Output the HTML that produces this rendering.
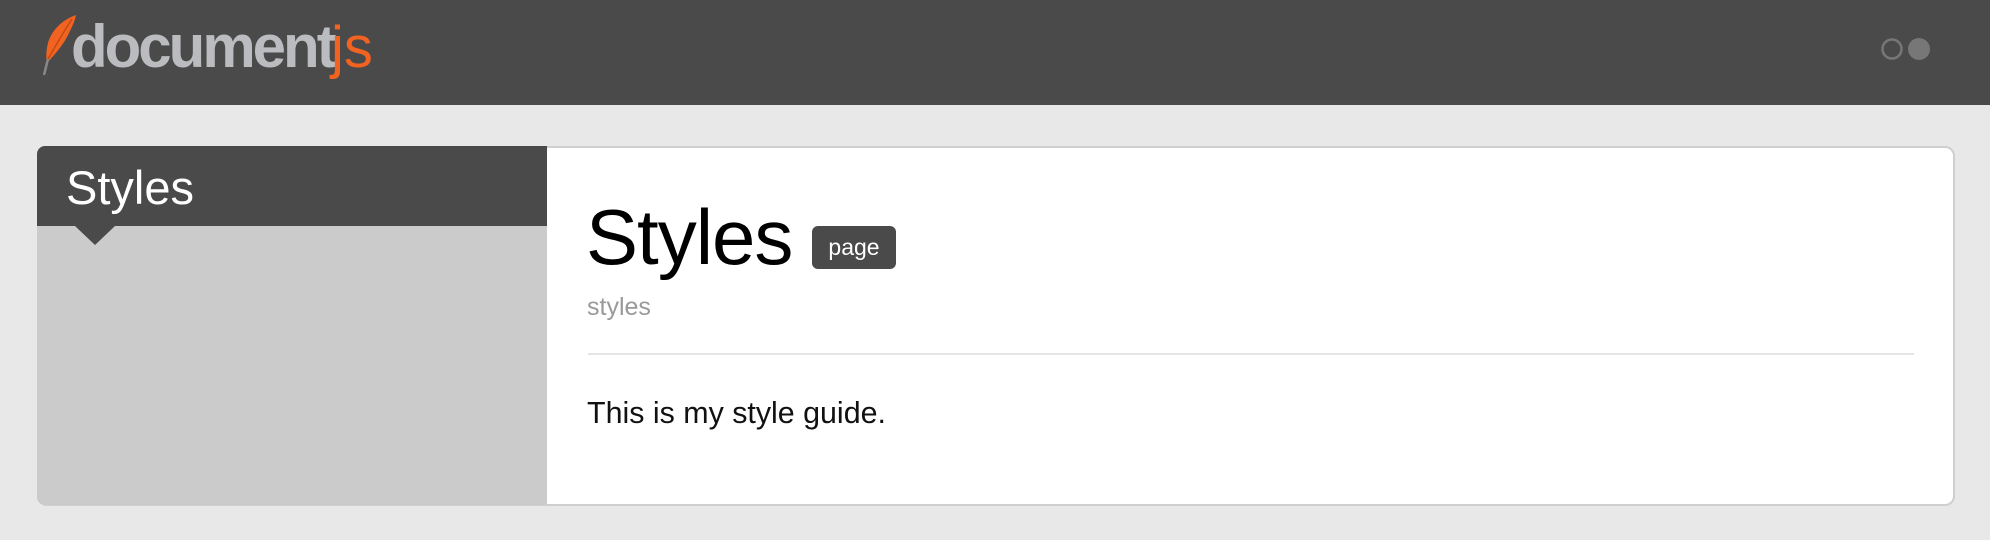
<!DOCTYPE html>
<html><head><meta charset="utf-8"><style>
body{margin:0;width:1990px;height:540px;background:#e8e8e8;font-family:"Liberation Sans",sans-serif;overflow:hidden;position:relative}
.hdr{position:absolute;left:0;top:0;width:1990px;height:105px;background:#4a4a4a}
.logo{position:absolute;left:71px;top:12px;font-size:60px;font-weight:bold;color:#bbbcbf;letter-spacing:-3px}
.js{position:absolute;left:331px;top:14px;font-size:58px;color:#f26322;font-weight:normal;letter-spacing:0}
.card{position:absolute;left:37px;top:146px;width:1918px;height:360px;background:#fff;border:2px solid #cfcfcf;border-radius:10px;box-sizing:border-box}
.side{position:absolute;left:37px;top:146px;width:510px;height:359px;background:#cbcbcb;border-radius:8px 0 0 8px}
.sh{position:absolute;left:0;top:0;width:510px;height:80px;background:#4a4a4a;border-radius:8px 0 0 0}
.sh span{position:absolute;left:29px;top:14px;font-size:47px;color:#fff}
.arr{position:absolute;left:38px;top:80px;width:0;height:0;border-left:20px solid transparent;border-right:20px solid transparent;border-top:19px solid #4a4a4a}
.t{position:absolute;left:586px;top:192px;font-size:78px;color:#000;letter-spacing:-1px}
.badge{position:absolute;left:812px;top:226px;width:84px;height:43px;background:#4a4a4a;border-radius:6px;color:#fff;font-size:23px;text-align:center;line-height:43px}
.sub{position:absolute;left:587px;top:293px;font-size:25px;color:#999}
.hr{position:absolute;left:588px;top:353px;width:1326px;height:2px;background:#e5e5e5}
.p{position:absolute;left:587px;top:396px;font-size:30.4px;color:#111}
</style></head><body>
<div class="hdr">
<svg style="position:absolute;left:38px;top:13px" width="42" height="62" viewBox="0 0 42 62"><path d="M38 2 C26 6 14 16 10 30 C8 38 8 44 9 50 C16 42 24 34 30 22 C34 14 37 8 38 2Z" fill="#f26322"/><path d="M34 6 C26 18 18 32 10 46" stroke="#c44a10" stroke-width="1.5" fill="none"/><path d="M10 46 L6 62" stroke="#888" stroke-width="2.5"/></svg>
<div class="logo">document</div><div class="js">js</div>
<svg style="position:absolute;left:1878px;top:36px" width="56" height="28"><circle cx="14" cy="13" r="9.5" fill="none" stroke="#777" stroke-width="2.5"/><circle cx="41" cy="13" r="11" fill="#777"/></svg>
</div>
<div class="card"></div>
<div class="side"><div class="sh"><span>Styles</span></div><div class="arr"></div></div>
<div class="t">Styles</div>
<div class="badge">page</div>
<div class="sub">styles</div>
<div class="hr"></div>
<div class="p">This is my style guide.</div>
</body></html>
